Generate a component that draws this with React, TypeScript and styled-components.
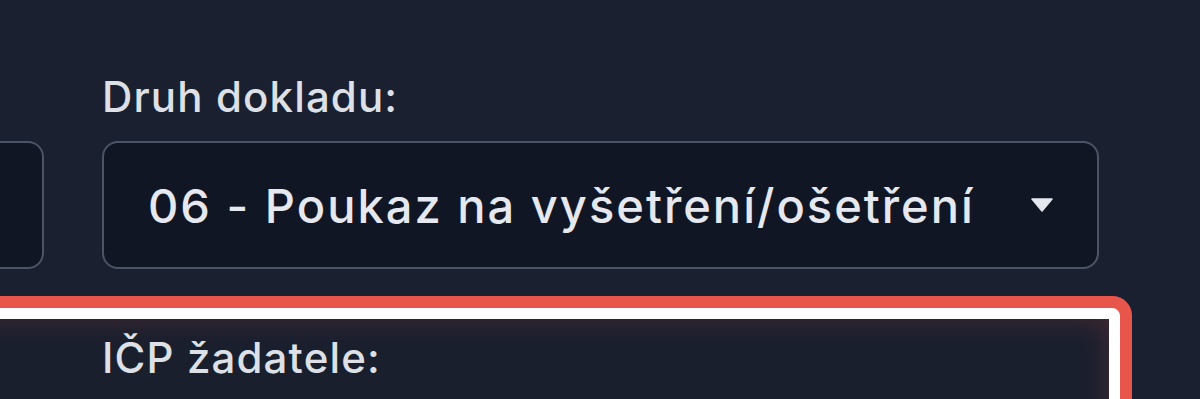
import styled, { createGlobalStyle } from 'styled-components';

const GlobalStyle = createGlobalStyle`
  html, body {
    margin: 0;
    padding: 0;
    background: #1b2030;
    overflow: hidden;
  }
  body {
    font-family: Inter, "Noto Sans", sans-serif;
    color: #e4e7ee;
  }
`

const Page = styled.div`
  width: 1200px;
  height: 399px;
  overflow: hidden;
  padding-top: 72px;
  box-sizing: border-box;
`

// the form is wider than the viewport; its first column sits mostly off to the left
const Form = styled.div`
  margin-left: -953px;
  width: 2052px;
  display: flex;
  flex-direction: column;
  gap: 39px;
`

const Row = styled.div`
  display: grid;
  grid-template-columns: 997px 997px;
  column-gap: 58px;
`

const Field = styled.div`
  display: flex;
  flex-direction: column;
`

const Label = styled.label`
  font-size: 42px;
  font-weight: 500;
  line-height: 50px;
  height: 50px;
  margin-bottom: 19px;
  letter-spacing: 0.027em;
  color: #dde0e7;
  white-space: nowrap;
`

const SelectBox = styled.div`
  height: 128px;
  box-sizing: border-box;
  border: 2px solid #4b5365;
  border-radius: 16px;
  background: #111625;
  display: flex;
  align-items: center;
  justify-content: space-between;
  padding: 0 44px 0 44px;
`

const Value = styled.span`
  font-size: 47px;
  font-weight: 500;
  letter-spacing: 0.043em;
  color: #e6e8ef;
  white-space: nowrap;
`

const Arrow = styled.svg`
  width: 22px;
  height: 14px;
  flex: none;
`

const Panel = styled.div`
  margin: 0 -21px;
  border: 11px solid #ffffff;
  border-radius: 8px;
  padding: 14px 10px 40px;
  background: #1a1f2e;
  box-shadow: 0 0 0 12px #e8554a, inset 0 0 28px rgba(232, 85, 74, 0.22);
`

export default function App() {
  return (
    <>
      <GlobalStyle />
      <Page>
        <Form>
          <Row>
            <Field>
              <Label />
              <SelectBox />
            </Field>
            <Field>
              <Label>Druh dokladu:</Label>
              <SelectBox>
                <Value>06 - Poukaz na vyšetření/ošetření</Value>
                <Arrow viewBox="0 0 22 14">
                  <path d="M1 1 L21 1 L11 13 Z" fill="#e6e8ef" stroke="#e6e8ef" strokeWidth="1.5" strokeLinejoin="round" />
                </Arrow>
              </SelectBox>
            </Field>
          </Row>
          <Panel>
            <Row>
              <Field>
                <Label />
              </Field>
              <Field>
                <Label>IČP žadatele:</Label>
              </Field>
            </Row>
          </Panel>
        </Form>
      </Page>
    </>
  )
}
